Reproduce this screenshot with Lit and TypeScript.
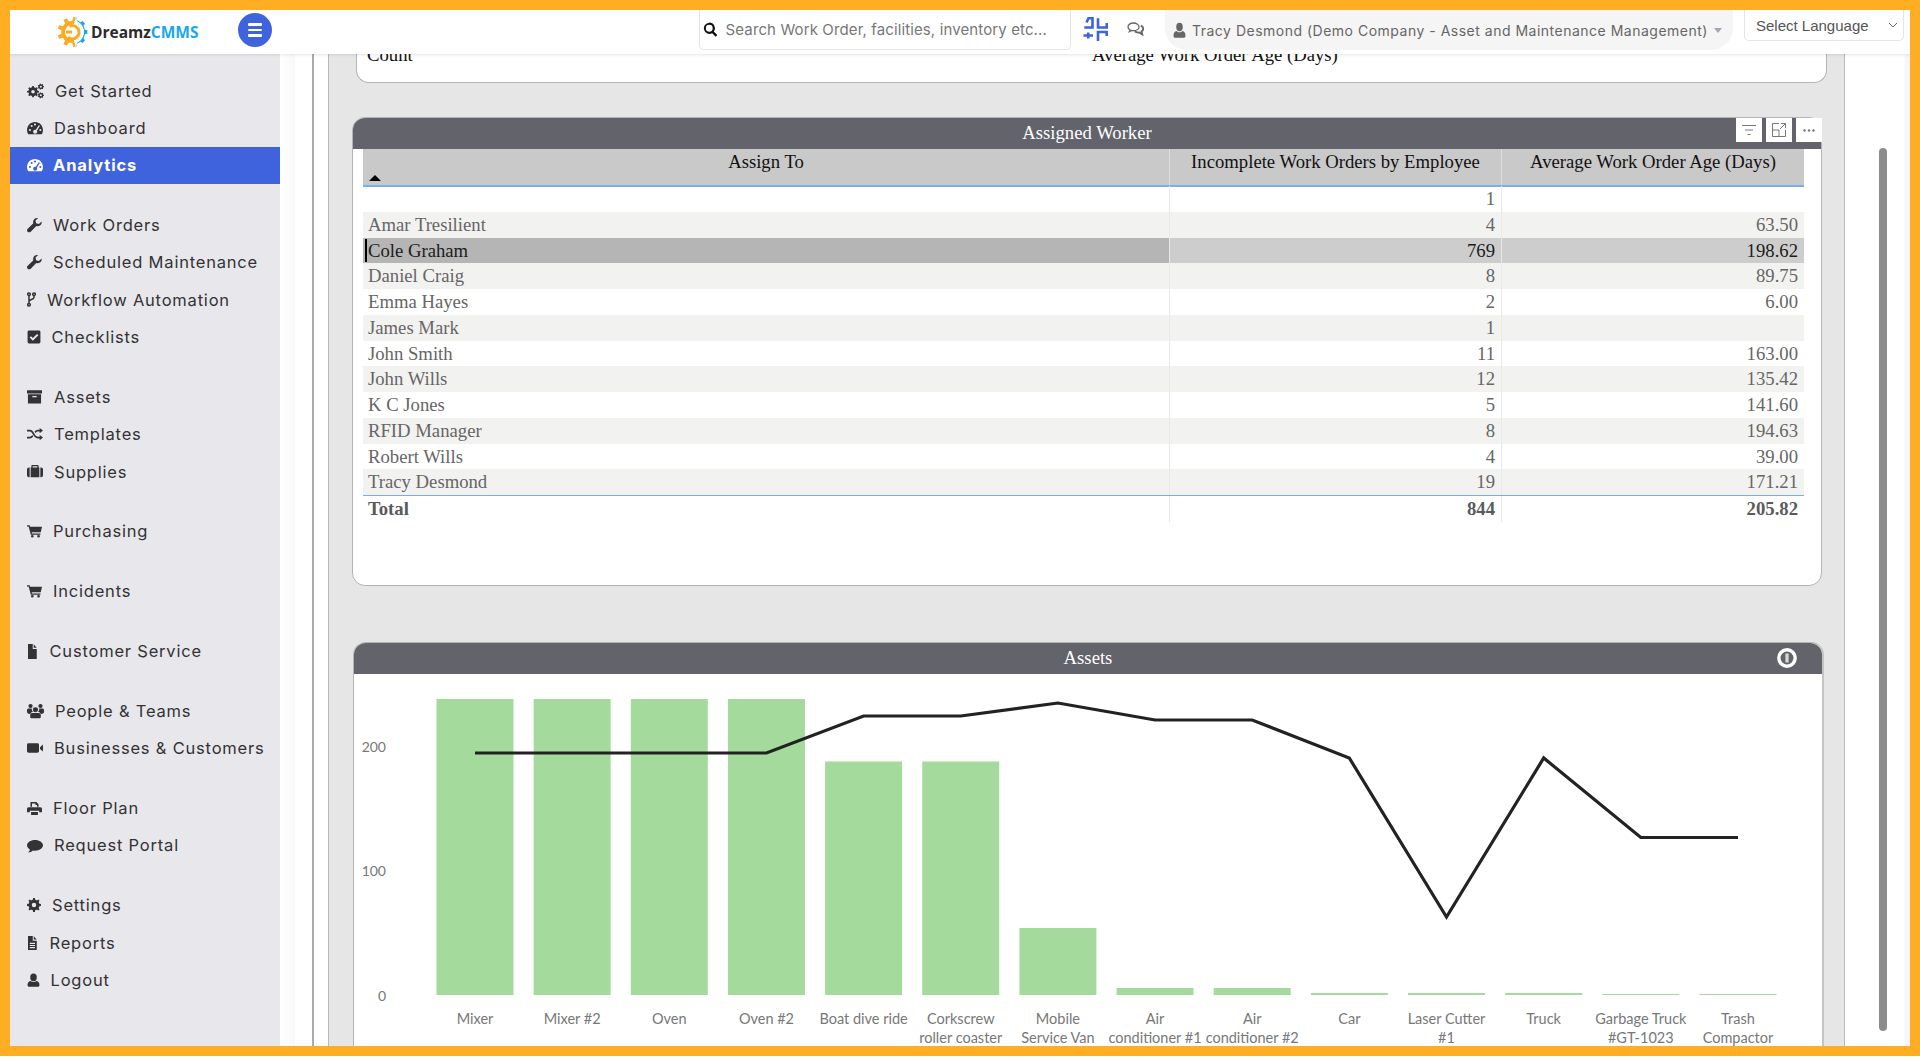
import { LitElement, html, css, svg } from "lit";
import { customElement } from "lit/decorators.js";

function gear(cx: number, cy: number, ro: number, ri: number, n: number) {
  let d = "";
  const step = (Math.PI * 2) / n;
  for (let i = 0; i < n; i++) {
    const a = i * step;
    const pts: [number, number][] = [
      [ri, a - step * 0.5],
      [ri, a - step * 0.27],
      [ro, a - step * 0.17],
      [ro, a + step * 0.17],
      [ri, a + step * 0.27],
    ];
    for (const [r, t] of pts) {
      d += `${d ? "L" : "M"}${(cx + r * Math.cos(t)).toFixed(2)} ${(cy + r * Math.sin(t)).toFixed(2)}`;
    }
  }
  return d + "Z";
}
function hole(cx: number, cy: number, r: number) {
  return `M${cx - r} ${cy}a${r} ${r} 0 1 0 ${r * 2} 0a${r} ${r} 0 1 0 ${-r * 2} 0Z`;
}

const ICONS: Record<string, string> = {
  cogs: gear(8.5, 13, 8.5, 6.6, 8) + hole(8.5, 13, 2.6) + gear(19.5, 5.5, 4.6, 3.5, 7) + hole(19.5, 5.5, 1.5) + gear(19.5, 18.5, 4.6, 3.5, 7) + hole(19.5, 18.5, 1.5),
  dash: "M12 3C5.4 3 0 8.4 0 15c0 2.3.6 4.4 1.8 6.2h20.4C23.4 19.4 24 17.3 24 15 24 8.4 18.6 3 12 3Z" + hole(4.4, 15, 1.6) + hole(7, 9, 1.6) + hole(12, 6.8, 1.6) + hole(20, 15, 1.6) + "M17.6 7.8l1.9.9-4.6 7.4a3 3 0 1 1-5.7 1.4 3 3 0 0 1 4.1-2.8Z",
  wrench: "M23.4 5.6c.4 3-1 5.7-3.6 6.9-1.7.8-3.4.8-5 .2L6 21.8c-1.4 1.5-3.7 1.5-5 .2-1.4-1.4-1.3-3.5.2-4.9l9-8.7c-.6-1.7-.5-3.4.3-5C11.8.8 14.6-.4 17.6.2l-4 3.9.9 4.4 4.4 1Z",
  check: "M3.5 1h17A2.5 2.5 0 0 1 23 3.5v17a2.5 2.5 0 0 1-2.5 2.5h-17A2.5 2.5 0 0 1 1 20.500v-17A2.500 2.500 0 0 1 3.500 1ZM10 18.500l9.500-9.500-2.300-2.300-7.200 7.200-3.200-3.200-2.300 2.300Z",
  archive: "M0 2h24v5H0ZM1.500 8.500h21V23h-21ZM8.500 11v2.300h7V11Z",
  random: "M19 1.500l5 4.500-5 4.500V7.500h-2.600c-1.700 0-2.700 1.100-3.700 2.700l-1.400-2.300C12.700 5.900 14.300 4.500 16.400 4.500H19ZM0 4.500h4.200c3.300 0 4.800 2.700 6.300 5.600 1.400 2.700 2.700 6.400 5.900 6.400H19v-3l5 4.500-5 4.500v-3h-2.600c-3.900 0-5.800-3.300-7.500-6.500-1.300-2.500-2.500-5.500-4.700-5.500H0ZM0 16.500h4.200c1.600 0 2.700-1.200 3.700-2.800l1.400 2.400c-1.300 2-2.900 3.400-5.100 3.400H0Z",
  case: "M8 1.500h8a1.500 1.500 0 0 1 1.500 1.500v2.500h1V21h-13V5.500h1V3A1.500 1.500 0 0 1 8 1.500ZM8.500 3.500v2h7v-2ZM4 5.500V21H3a3 3 0 0 1-3-3V8.500a3 3 0 0 1 3-3ZM20 5.500h1a3 3 0 0 1 3 3V18a3 3 0 0 1-3 3h-1Z",
  cart: "M0 2h4.200l.7 2.500H24l-2 9.500H7.500l.5 2.200h13.500v2.300H6.100L2.600 4.300H0Z" + hole(8.500, 21, 2.200) + hole(18.500, 21, 2.200),
  file: "M2 0h9.500v8h8v16H2ZM13.500.300L19.300 6h-5.800Z",
  users: "M12 6.500a3.600 3.600 0 1 1 0 7.200 3.600 3.600 0 0 1 0-7.200ZM5 1.500a3 3 0 1 1 0 6 3 3 0 0 1 0-6ZM19 1.500a3 3 0 1 1 0 6 3 3 0 0 1 0-6ZM0 10.500c0-1.500 1.200-2.400 2.500-2.400h4.300c-.3 2.200.4 3.800 1.900 5-2.300.5-3.600 1.700-4.300 3.400C2 16.500 0 15.300 0 13.500ZM24 10.500c0-1.500-1.200-2.400-2.500-2.400h-4.300c.3 2.200-.4 3.800-1.900 5 2.300.5 3.600 1.700 4.300 3.400 2.400 0 4.400-1.200 4.400-3ZM7.500 15h9c1.800 0 3 1.300 3 3.200v2.300c0 1.600-1 2.500-2.500 2.500H7c-1.500 0-2.500-.9-2.500-2.500v-2.300c0-1.900 1.200-3.200 3-3.200Z",
  video: "M2.500 4h13A2.500 2.500 0 0 1 18 6.500v11a2.500 2.500 0 0 1-2.500 2.500h-13A2.500 2.500 0 0 1 0 17.500v-11A2.500 2.500 0 0 1 2.500 4ZM19.500 10.500L24 6v12l-4.500-4.500Z",
  print: "M6 1.500h9l3.500 3.500v4H16V6.500h-2.500V4H8v5H5.500V2ZM2.500 10h19A2.500 2.500 0 0 1 24 12.500V18h-4.500v-2.500h-15V18H0v-5.500A2.500 2.500 0 0 1 2.500 10ZM6.500 17.500h11V22.500h-11Z",
  comment: "M12 3c6.600 0 12 3.900 12 8.700s-5.400 8.700-12 8.700c-1 0-2-.1-3-.3C7 22 4 23.500 1.500 23.300c1.500-1.300 2.500-3 2.800-5C1.600 16.600 0 14.300 0 11.700 0 6.900 5.400 3 12 3Z",
  cog: gear(12, 12, 12, 9.4, 8) + hole(12, 12, 3.8),
  filetext: "M2 0h9.500v8h8v16H2ZM13.500.300L19.300 6h-5.800ZM5.500 11.500v2h10.500v-2ZM5.500 15.300v2h10.500v-2ZM5.500 19v2h10.500v-2Z",
  user: "M12 1a6 6 0 0 1 6 6v1a6 6 0 0 1-12 0V7a6 6 0 0 1 6-6ZM6.500 13.500c1.500 1.200 3.400 2 5.500 2s4-.8 5.500-2c3.500.3 5.500 3 5.500 7 0 2-1.300 3-3 3H4c-1.700 0-3-1-3-3 0-4 2-6.700 5.500-7Z",
  search: "M10 1a9 9 0 0 1 7.300 14.300l5.600 5.600-2.600 2.600-5.600-5.600A9 9 0 1 1 10 1ZM10 4.500a5.500 5.500 0 1 0 0 11 5.500 5.500 0 0 0 0-11Z",
};

type Item = { t: string; i: string; w: number; h: number; x: number; on?: boolean };
const GROUPS: Item[][] = [
  [
    { t: "Get Started", i: "cogs", w: 17, h: 16, x: 55 },
    { t: "Dashboard", i: "dash", w: 16, h: 16, x: 54 },
    { t: "Analytics", i: "dash", w: 16, h: 16, x: 53, on: true },
  ],
  [
    { t: "Work Orders", i: "wrench", w: 15, h: 15, x: 53 },
    { t: "Scheduled Maintenance", i: "wrench", w: 15, h: 15, x: 53 },
    { t: "Workflow Automation", i: "fork", w: 9, h: 15, x: 47 },
    { t: "Checklists", i: "check", w: 14, h: 14, x: 51.5 },
  ],
  [
    { t: "Assets", i: "archive", w: 15, h: 15, x: 54 },
    { t: "Templates", i: "random", w: 16, h: 14, x: 54 },
    { t: "Supplies", i: "case", w: 16, h: 15, x: 54 },
  ],
  [{ t: "Purchasing", i: "cart", w: 15, h: 14, x: 53 }],
  [{ t: "Incidents", i: "cart", w: 15, h: 14, x: 53 }],
  [{ t: "Customer Service", i: "file", w: 12, h: 15, x: 49.5 }],
  [
    { t: "People & Teams", i: "users", w: 17, h: 16, x: 55 },
    { t: "Businesses & Customers", i: "video", w: 16, h: 14, x: 54 },
  ],
  [
    { t: "Floor Plan", i: "print", w: 15, h: 15, x: 53 },
    { t: "Request Portal", i: "comment", w: 16, h: 15, x: 54 },
  ],
  [
    { t: "Settings", i: "cog", w: 14, h: 14, x: 52 },
    { t: "Reports", i: "filetext", w: 12, h: 14, x: 49.5 },
    { t: "Logout", i: "user", w: 13, h: 14, x: 50.5 },
  ],
];

const ROWS = [
  ["", "1", ""],
  ["Amar Tresilient", "4", "63.50"],
  ["Cole Graham", "769", "198.62"],
  ["Daniel Craig", "8", "89.75"],
  ["Emma Hayes", "2", "6.00"],
  ["James Mark", "1", ""],
  ["John Smith", "11", "163.00"],
  ["John Wills", "12", "135.42"],
  ["K C Jones", "5", "141.60"],
  ["RFID Manager", "8", "194.63"],
  ["Robert Wills", "4", "39.00"],
  ["Tracy Desmond", "19", "171.21"],
];

const BARS: { top: number; line: number; label: string[] }[] = [
  { top: 699, line: 753, label: ["Mixer"] },
  { top: 699, line: 753, label: ["Mixer #2"] },
  { top: 699, line: 753, label: ["Oven"] },
  { top: 699, line: 753, label: ["Oven #2"] },
  { top: 761.5, line: 716, label: ["Boat dive ride"] },
  { top: 761.5, line: 716, label: ["Corkscrew", "roller coaster"] },
  { top: 928, line: 703, label: ["Mobile", "Service Van"] },
  { top: 988, line: 720, label: ["Air", "conditioner #1"] },
  { top: 988, line: 720, label: ["Air", "conditioner #2"] },
  { top: 993, line: 758, label: ["Car"] },
  { top: 993, line: 917, label: ["Laser Cutter", "#1"] },
  { top: 993, line: 758, label: ["Truck"] },
  { top: 994, line: 837.5, label: ["Garbage Truck", "#GT-1023"] },
  { top: 994, line: 837.5, label: ["Trash", "Compactor"] },
];

const icon = (name: string, w: number, h: number) =>
  name === "fork"
    ? html`<svg class="ico" width=${w} height=${h} viewBox="0 0 9 15" fill="none" stroke="currentColor" stroke-width="1.500">
        <circle cx="2" cy="2.200" r="1.300"></circle>
        <circle cx="7" cy="2.200" r="1.300"></circle>
        <circle cx="2" cy="12.800" r="1.300"></circle>
        <path d="M2 3.500V11.500M7 3.500V5.500C7 7.500 2 7.500 2 9.500"></path>
      </svg>`
    : html`<svg
        class="ico"
        width=${w}
        height=${h}
        viewBox="0 0 24 24"
        preserveAspectRatio="none"
        fill="currentColor"
        fill-rule="evenodd"
      >
        <path d=${ICONS[name]}></path>
      </svg>`;

@customElement("app-root")
export class AppRoot extends LitElement {
  static styles = css`
    :host { display: block; width: 1920px; height: 1057px; overflow: hidden; background: #fff; }
    * { box-sizing: border-box; }
    .frame { width: 1920px; height: 1056px; border: 10px solid #ffae23; display: flex; flex-direction: column; overflow: hidden; background: #fff; }
    .topbar { height: 44px; flex: none; display: flex; align-items: flex-start; background: #fff; position: relative; z-index: 2; box-shadow: 0 1px 3px rgba(0,0,0,.1); font-family: Inter, "Liberation Sans", sans-serif; }
    .brand { width: 228px; height: 44px; padding-left: 47px; display: flex; align-items: center; gap: 2px; }
    .brand-text { font: 700 15.500px "Open Sans", sans-serif; color: #2b2b2b; white-space: nowrap; }
    .brand-text b { color: #1aa7ee; font-weight: 700; }
    .burger { width: 34px; height: 34px; margin-top: 3px; border-radius: 50%; background: #3f63dd; display: flex; flex-direction: column; justify-content: center; align-items: center; gap: 3px; }
    .burger i { display: block; width: 14px; height: 2.400px; border-radius: 1px; background: #fff; }
    .search { width: 372px; height: 40px; margin-left: 426.600px; border: 1px solid #e4e4e4; border-top: 0; border-radius: 0 0 5px 5px; display: flex; align-items: center; padding: 0 0 0 3.500px; gap: 7.500px; font-size: 15px; letter-spacing: .12px; color: #777; white-space: nowrap; }
    .search .ico { color: #111; }
    .tool { margin-left: 12.400px; margin-top: 7px; color: #3f63dd; }
    .chat { margin-left: 19px; margin-top: 12px; color: #666; }
    .pill { width: 568px; height: 40px; margin-left: 21px; padding-left: 8px; border-radius: 0 0 22px 22px; background: #f5f5f5; display: flex; align-items: center; gap: 6px; color: #666; font-size: 14px; letter-spacing: .5px; white-space: nowrap; }
    .caret { width: 0; height: 0; border: 4px solid transparent; border-top: 5px solid #a2a8b4; border-bottom: 0; }
    .lang { width: 160px; height: 31px; margin-left: 11px; border: 1px solid #e4e4e4; border-top: 0; border-radius: 0 0 5px 5px; display: flex; align-items: center; justify-content: space-between; padding: 0 5px 0 11px; font: 15px "Liberation Sans", sans-serif; color: #555; }
    .body { flex: 1; min-height: 0; display: flex; }
    .sidebar { width: 270px; flex: none; background: #e7e7ec; padding-top: 18px; font-family: Inter, "Liberation Sans", sans-serif; }
    .group + .group { margin-top: 22.500px; }
    .item { height: 37.330px; display: flex; align-items: center; padding-left: 17px; font-size: 16.500px; letter-spacing: .8px; color: #333; white-space: nowrap; }
    .item.on { background: #3f63dd; color: #fff; font-weight: 700; letter-spacing: .85px; }
    .shade { width: 15px; flex: none; background: linear-gradient(90deg, #fff, #f8f8f8); }
    .pad { width: 19px; flex: none; background: #fff; border-right: 2px solid #aaa; }
    .pad2 { width: 14px; flex: none; background: #fff; }
    .main { width: 517px; flex: 1; min-width: 0; background: #e6e6e6; border-left: 1px solid #b9b9b9; border-right: 1px solid #b9b9b9; overflow: hidden; font-family: "Liberation Serif", serif; }
    .rail { width: 65px; flex: none; background: #fff; padding: 94px 0 0 34px; border-right: 5px solid #f6f6f6; }
    .thumb { width: 8px; height: 883px; border-radius: 4px; background: #8c8c8c; }
    .stack { margin-top: -20px; display: flex; flex-direction: column; }
    .card { background: #fff; border: 1px solid #b4b4b4; flex: none; }
    .summary { width: 1471px; height: 49px; margin-left: 27px; border-top: 0; border-radius: 0 0 13px 13px; padding: 10px 0 0 10px; display: grid; grid-template-columns: 725px 1fr; font-size: 18.700px; line-height: 21px; color: #111; }
    .assigned { width: 1470px; height: 469px; margin: 34px 0 0 23px; border-radius: 13px; position: relative; }
    .assets { width: 1471px; height: 500px; margin: 56px 0 0 24px; border-radius: 13px 13px 0 0; border-right-width: 2px; border-right-color: #c4c4c4; }
    .head { height: 31px; background: #63636b; border-radius: 12px 12px 0 0; color: #fff; font-size: 18.700px; line-height: 29px; text-align: center; position: relative; }
    .assets .head { line-height: 30px; }
    .tools { position: absolute; right: -1px; top: 0; display: flex; gap: 4px; }
    .btn { width: 26px; height: 24px; background: #fff; display: flex; align-items: center; justify-content: center; color: #777; }
    .info { position: absolute; right: 24px; top: 4px; }
    .table { margin-left: 10px; width: 1441px; font-size: 18.700px; position: relative; }
    .row, .thead { display: grid; grid-template-columns: 806px 332px 303px; }
    .thead { height: 38px; background: #c9c9c9; border-bottom: 2px solid #78aef0; color: #111; }
    .th { text-align: center; line-height: 26px; }
    .th + .th { border-left: 1px solid #dedede; }
    .sort { position: absolute; left: 6px; top: 26px; width: 0; height: 0; border: 6.500px solid transparent; border-top: 0; border-bottom: 6px solid #000; }
    .rows { margin-top: -1px; }
    .row { height: 25.750px; color: #666; line-height: 25.500px; }
    .row:nth-child(even) { background: #f2f2f0; }
    .td { padding: 0 5px; white-space: nowrap; }
    .td + .td { border-left: 1px solid #e9e9e9; text-align: right; padding-right: 6px; }
    .row.sel { background: #cdcdcd; color: #1c1c1c; }
    .row.sel .td:first-child { background: #b5b5b5; position: relative; }
    .row.sel .td:first-child::before { content: ""; position: absolute; left: 2px; top: 1px; bottom: 1px; width: 2px; background: #000; }
    .row.total { border-top: 1.500px solid #78aef0; font-weight: 700; color: #5a5a5a; background: #fff; }
    .plot { display: block; }
    .plot text { font: 14.500px Lato, sans-serif; fill: #777; }
    .plot .tick { font-size: 14px; }
  `;

  render() {
    const cx = (i: number) => 475 + 97.15 * i;
    const points = BARS.map((b, i) => `${cx(i).toFixed(1)},${b.line}`).join(" ");
    return html`<div class="frame">
      <header class="topbar">
        <div class="brand">
          <svg width="32" height="30" viewBox="0 0 32 30">
            <defs>
              <clipPath id="lf"><path d="M0 0H19L14 15 19 30H0Z"></path></clipPath>
              <clipPath id="rt"><path d="M19 0H32V30H19L24 15Z"></path></clipPath>
            </defs>
            <path clip-path="url(#lf)" fill="#fbab1f" d=${gear(15.5, 15, 15, 11.2, 9)}></path>
            <path clip-path="url(#rt)" fill="#1aa7ee" d=${gear(15.5, 15, 15, 12.6, 9)}></path>
            <circle cx="15.500" cy="15" r="11.500" fill="#fff" clip-path="url(#rt)"></circle>
            <circle cx="15.500" cy="15" r="7.500" fill="#fff"></circle>
            <path d="M12.500 9.500A6.500 6.500 0 1 1 11 20M9 15H15" fill="none" stroke="#fbab1f" stroke-width="3"></path>
          </svg>
          <span class="brand-text">Dreamz<b>CMMS</b></span>
        </div>
        <div class="burger"><i></i><i></i><i></i></div>
        <div class="search">${icon("search", 15, 15)}<span>Search Work Order, facilities, inventory etc...</span></div>
        <svg class="tool" width="25" height="24" viewBox="0 0 25 24" fill="none" stroke="currentColor" stroke-width="2.600">
          <path d="M1.300 10.500H9.500V1.300H5.500L3.500 5.500"></path>
          <path d="M15 1.300V10.500H23.700V6"></path>
          <path d="M.500 18.500H10M5.200 15.500V21.500"></path>
          <path d="M15 24V15H23.700V19"></path>
        </svg>
        <svg class="chat" width="17" height="14" viewBox="0 0 17 14" fill="none" stroke="currentColor" stroke-width="1.300">
          <path d="M6.500 1C3.400 1 1 2.700 1 4.900c0 1.200.8 2.300 2 3l-.7 1.800 2.500-1.200c.6.100 1.100.200 1.700.200 3.100 0 5.500-1.700 5.500-3.800S9.600 1 6.500 1Z"></path>
          <path d="M13.800 3.600C15.300 4.300 16.200 5.500 16.200 6.800c0 1.100-.7 2.100-1.700 2.800l.8 2.900-3-2c-1.600.2-3.400-.2-4.600-1.200" stroke-width="1.800"></path>
        </svg>
        <div class="pill">
          ${icon("user", 13, 16)}
          <span>Tracy Desmond (Demo Company - Asset and Maintenance Management)</span>
          <span class="caret"></span>
        </div>
        <div class="lang">
          <span>Select Language</span>
          <svg width="10" height="6" viewBox="0 0 10 6" fill="none" stroke="#666" stroke-width="1"><path d="M1 1L5 5 9 1"></path></svg>
        </div>
      </header>
      <div class="body">
        <nav class="sidebar">
          ${GROUPS.map(
            (g) => html`<div class="group">
              ${g.map(
                (it) => html`<div class="item ${it.on ? "on" : ""}">
                  ${icon(it.i, it.w, it.h)}
                  <span style="margin-left:${it.x - 27 - it.w}px">${it.t}</span>
                </div>`
              )}
            </div>`
          )}
        </nav>
        <div class="shade"></div>
        <div class="pad"></div>
        <div class="pad2"></div>
        <main class="main">
          <div class="stack">
            <section class="card summary"><span>Count</span><span>Average Work Order Age (Days)</span></section>
            <section class="card assigned">
              <div class="head">Assigned Worker</div>
              <div class="tools">
                <div class="btn">
                  <svg width="14" height="12" viewBox="0 0 14 12" fill="none" stroke="currentColor"><path d="M0 1.500H14M3 6H11M5.500 10.500H8.500"></path></svg>
                </div>
                <div class="btn">
                  <svg width="14" height="14" viewBox="0 0 14 14" fill="none" stroke="currentColor"><path d="M7 .5H.5V13.500H13.500V7M.5 7H7V13.500M9 .5H13.500V5M13.500 .5L8 6"></path></svg>
                </div>
                <div class="btn">
                  <svg width="12" height="3" viewBox="0 0 12 3" fill="currentColor"><circle cx="1.500" cy="1.500" r="1.200"></circle><circle cx="6" cy="1.500" r="1.200"></circle><circle cx="10.500" cy="1.500" r="1.200"></circle></svg>
                </div>
              </div>
              <div class="table">
                <div class="thead">
                  <div class="th">Assign To</div>
                  <div class="th">Incomplete Work Orders by Employee</div>
                  <div class="th">Average Work Order Age (Days)</div>
                </div>
                <div class="sort"></div>
                <div class="rows">
                  ${ROWS.map(
                    (r) => html`<div class="row ${r[0] === "Cole Graham" ? "sel" : ""}">
                      <div class="td">${r[0]}</div>
                      <div class="td">${r[1]}</div>
                      <div class="td">${r[2]}</div>
                    </div>`
                  )}
                  <div class="row total">
                    <div class="td">Total</div>
                    <div class="td">844</div>
                    <div class="td">205.82</div>
                  </div>
                </div>
              </div>
            </section>
            <section class="card assets">
              <div class="head">
                Assets
                <svg class="info" width="22" height="22" viewBox="0 0 22 22">
                  <circle cx="11" cy="11" r="8.200" fill="none" stroke="#fff" stroke-width="3.400"></circle>
                  <rect x="9.400" y="6.500" width="3.200" height="9" fill="#d8d8d8"></rect>
                </svg>
              </div>
              <svg class="plot" width="1468" height="400" viewBox="354 674 1468 400">
                ${[["200", 752], ["100", 876], ["0", 1001]].map(
                  ([t, y]) => svg`<text class="tick" x="386" y=${y} text-anchor="end">${t}</text>`
                )}
                ${BARS.map(
                  (b, i) => svg`<rect x=${cx(i) - 38.5} y=${b.top} width="77" height=${995 - b.top} fill="#a4db9c"></rect>
                    ${b.label.map(
                      (l, k) => svg`<text x=${cx(i)} y=${1024 + k * 18.7} text-anchor="middle">${l}</text>`
                    )}`
                )}
                <polyline points=${points} fill="none" stroke="#222" stroke-width="3.200"></polyline>
              </svg>
            </section>
          </div>
        </main>
        <aside class="rail"><div class="thumb"></div></aside>
      </div>
    </div>`;
  }
}
